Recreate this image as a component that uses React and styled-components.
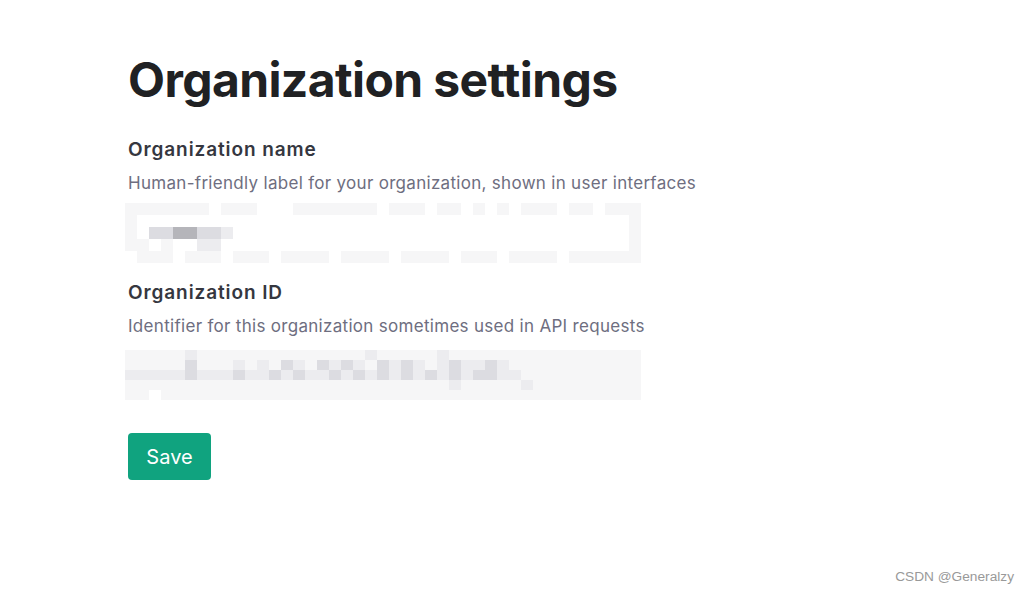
import React from 'react';
import styled, { createGlobalStyle } from 'styled-components';

const GlobalStyle = createGlobalStyle`
  html, body {
    margin: 0;
    padding: 0;
    background: #ffffff;
  }
  body {
    font-family: Inter, "Noto Sans", sans-serif;
  }
`;

const Page = styled.div`
  position: relative;
  width: 1029px;
  height: 593px;
  overflow: hidden;
  background: #fff;
`;

const Content = styled.div`
  display: flex;
  flex-direction: column;
  padding: 50px 0 0 128px;
  width: 640px;
`;

const Title = styled.h1`
  margin: 0 0 28px;
  font-size: 48px;
  line-height: 60px;
  font-weight: 700;
  letter-spacing: -0.6px;
  color: #202123;
`;

const Field = styled.div`
  display: flex;
  flex-direction: column;
  margin-bottom: ${(p) => p.gap || 0}px;
`;

const Label = styled.div`
  font-size: 19px;
  line-height: 24px;
  font-weight: 600;
  letter-spacing: 0.9px;
  color: #353740;
`;

const Hint = styled.div`
  margin-top: 9px;
  font-size: 17px;
  line-height: 24px;
  letter-spacing: 0.3px;
  color: #6e6e80;
`;

const Mosaic = styled.div`
  margin-top: ${(p) => p.top}px;
  display: grid;
  grid-template-columns: repeat(${(p) => p.cols}, 12px);
  grid-auto-rows: ${(p) => p.cell}px;
  margin-left: -3px;
  background: #fff;
`;

const Cell = styled.div`
  background: ${(p) => p.c};
`;

const Button = styled.button`
  align-self: flex-start;
  margin-top: 33px;
  width: 83px;
  height: 47px;
  border: none;
  border-radius: 4px;
  background: #10a37f;
  color: #fff;
  font-family: Inter, "Noto Sans", sans-serif;
  font-size: 20px;
  line-height: 24px;
  cursor: pointer;
`;

const Watermark = styled.div`
  position: absolute;
  right: 15px;
  bottom: 9px;
  font-family: "Liberation Sans", Arial, sans-serif;
  font-size: 13.7px;
  color: #999;
`;

// rough pixelated (obscured) field values, 43 columns of 12px
const nameRows = [
  'bbbbbbbabbbaaabbbbbbbabbbabbabababbbabbabbbbb',
  'b' + 'a'.repeat(41) + 'b',
  'baddeeddc' + 'a'.repeat(33) + 'b',
  'bbabaacca' + 'a'.repeat(33) + 'b',
  'abbbabbbabbbabbbbabbbbabbbbabbbabbbbabbbbbb',
];
const idRows = [
  'bbbbbcbbbbbbbbbbbbbbcbbbbbcbbbbbbbbbbbbbbbb',
  'bbbbbdbbbcbcbdcbdcdcbdcdcbcdccdcbbbbbbbbbbb',
  'cccccdcccdccdcdccdcdcdcdcdcdcddccbbbbbbbbbb',
  'bbbbbbbbbbbbbbbbbbbbbbbbbbbcbbbbbcbbbbbbbbb',
  'bbabbbbbbbbbbbbbbbbbbbbbbbbbbbbbbbbbbbbbbbb',
];
const shade = { a: '#ffffff', b: '#f6f6f7', c: '#ececef', d: '#dcdce1', e: '#b5b5ba' };

const Pixelated = ({ rows, top, cell }) => {
  const cols = 43;
  return (
    <Mosaic top={top} cols={cols} cell={cell}>
      {rows.flatMap((r, i) =>
        r.slice(0, cols).padEnd(cols, 'b').split('').map((ch, j) => <Cell key={`${i}-${j}`} c={shade[ch]} />)
      )}
    </Mosaic>
  );
};

const App = () => (
  <Page>
    <GlobalStyle />
    <Content>
      <Title>Organization settings</Title>
      <Field gap={18}>
        <Label>Organization name</Label>
        <Hint>Human-friendly label for your organization, shown in user interfaces</Hint>
        <Pixelated rows={nameRows} top={8} cell={12} />
      </Field>
      <Field>
        <Label>Organization ID</Label>
        <Hint>Identifier for this organization sometimes used in API requests</Hint>
        <Pixelated rows={idRows} top={12} cell={10} />
      </Field>
      <Button>Save</Button>
    </Content>
    <Watermark>CSDN @Generalzy</Watermark>
  </Page>
);

export default App;
